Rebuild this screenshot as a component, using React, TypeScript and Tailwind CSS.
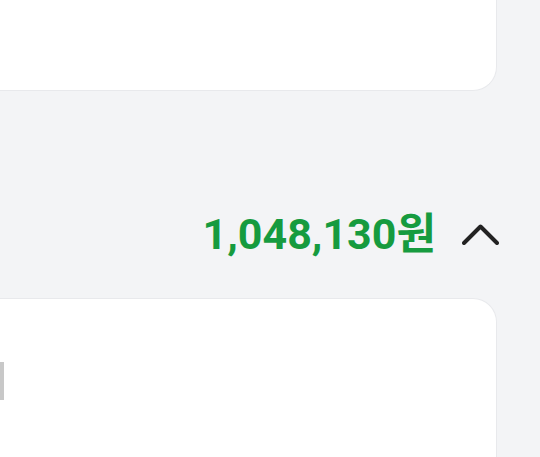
const CARD = 'bg-white border-[#e8e9ec]';

function ChevronUp() {
  return (
    <svg width="37" height="21" viewBox="0 0 37 21" fill="none" className="block shrink-0">
      <path
        d="M2 19 L18.5 2.5 L35 19"
        stroke="#222222"
        strokeWidth="4"
        strokeLinecap="round"
        strokeLinejoin="round"
      />
    </svg>
  );
}

export default function App() {
  const total = 1048130;

  return (
    <div className="h-[457px] w-[540px] overflow-hidden bg-[#f3f4f6] pr-[43px] font-['Roboto','Noto_Sans_CJK_KR',sans-serif]">
      {/* 위 카드 (잘린 부분) */}
      <div className={`${CARD} h-[91px] rounded-br-[24px] border-r border-b`} />

      {/* 합계 */}
      <div className="-mr-[2px] flex items-center justify-end gap-[26px] pt-[122px] pb-[42px]">
        <span className="text-[43px] leading-none font-bold text-[#169b3f]">
          {total.toLocaleString('ko-KR')}원
        </span>
        <ChevronUp />
      </div>

      {/* 아래 카드 */}
      <div className={`${CARD} h-[200px] rounded-tr-[24px] border-t border-r pt-[63px]`}>
        <div className="h-[38px] w-[4px] bg-[#c8c8c8]" />
      </div>
    </div>
  );
}
